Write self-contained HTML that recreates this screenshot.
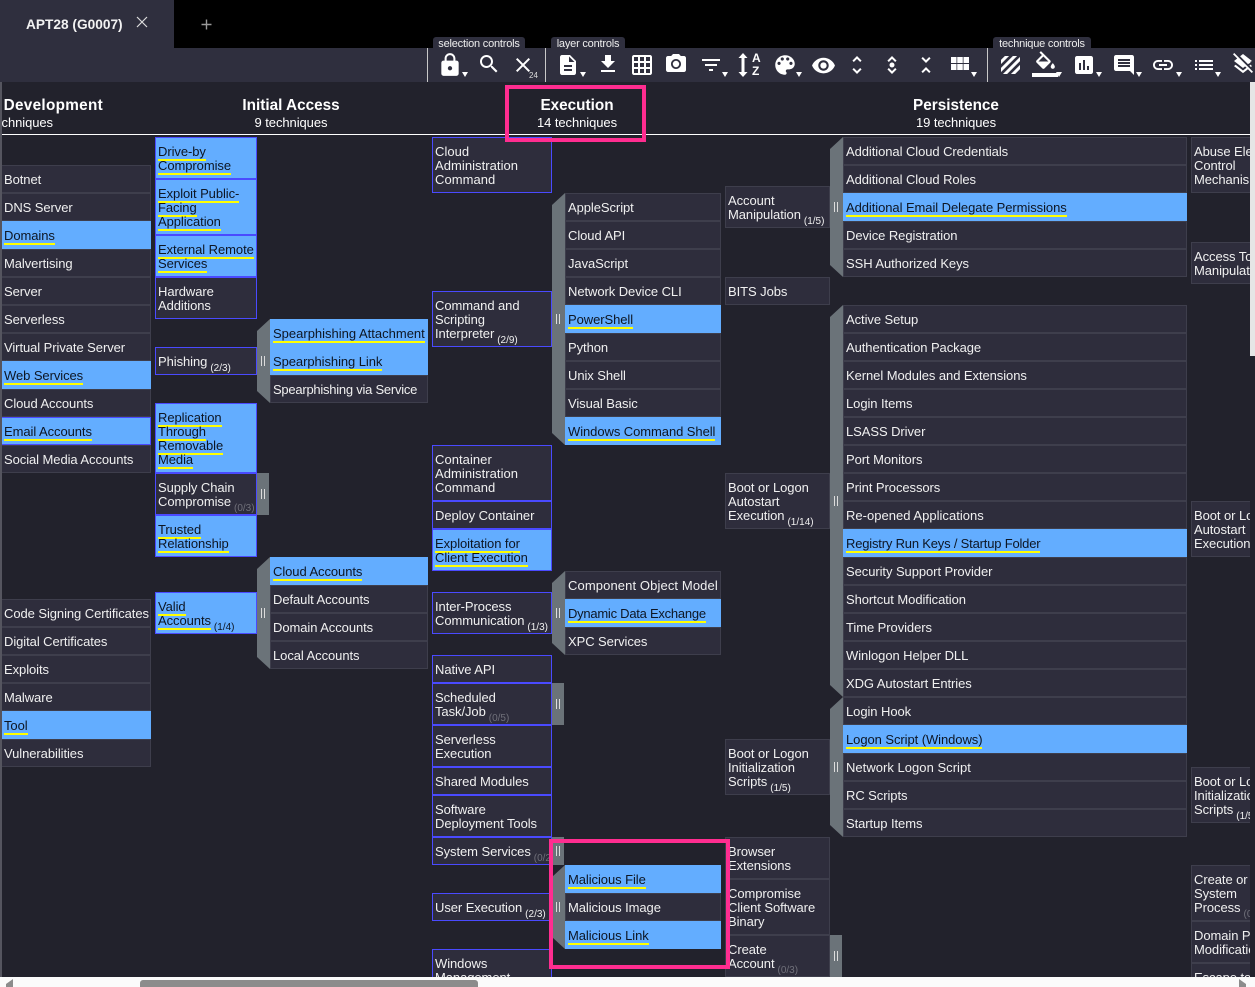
<!DOCTYPE html>
<html><head><meta charset="utf-8"><title>APT28 (G0007)</title>
<style>
html,body{margin:0;padding:0;background:#000;width:1255px;height:987px;overflow:hidden;font-family:"Liberation Sans",sans-serif}
div,svg{position:absolute}
#tool{left:0;top:48px;width:1255px;height:34px;background:#2f2f3e}
#page{left:0;top:82px;width:1255px;height:895px;background:#22222c}
#map{left:2px;top:0;width:1248px;height:977px;overflow:hidden}
#map>div{margin-left:-2px}
.c{box-sizing:border-box;background:#2e2d3c;border:1px solid #3e3e4c;padding:7px 2px 5px;line-height:14px;font-size:13px;letter-spacing:-.07px;color:#f0f0f0;white-space:nowrap;overflow:hidden}
.p{border-color:#4a4aff}
.b{background:#63adff;color:#0d1624;border-color:#63adff}
.bp{background:#63adff;color:#0d1624;border-color:#4a4aff}
u{text-decoration:none;display:inline-block;height:14px;box-shadow:0 2px 0 #ffff00;vertical-align:top}
i{font-style:normal;font-size:10px;position:relative;top:5px;margin-left:3px;letter-spacing:0}
i.g{color:#70707a}
.n{position:absolute;font-size:10px;letter-spacing:0;color:#70707a}
.c0{left:1px;width:150px}.c1{left:155px;width:102px}.s1{left:270px;width:158px}
.c2{left:432px;width:120px}.s2{left:565px;width:156px}
.c3{left:725px;width:105px}.s3{left:843px;width:344px}.c4{left:1191px;width:90px}
.sb{width:13px;background:#6b7379;clip-path:polygon(0 12px,100% 0,100% 100%,0 calc(100% - 12px))}
.sr{width:12px;background:#6b7379}
.sb:after,.sr:after{content:"";position:absolute;left:4px;top:calc(50% - 5px);width:2px;height:10px;border-left:1px solid #dcdcdc;border-right:1px solid #dcdcdc}
.h{color:#fff;text-align:center;white-space:nowrap}
.t{font-weight:700;font-size:15.3px;top:97px;line-height:18px}
.st{font-size:13px;top:115px;line-height:15px;letter-spacing:-.07px}
.lab{top:37px;height:12px;background:#2f2f3e;border-radius:3px 3px 0 0;color:#eee;font-size:11px;letter-spacing:-.2px;line-height:15px;text-align:center;white-space:nowrap;overflow:hidden}
.sep{top:48px;width:1px;height:34px;background:#c8c8c8}
.d{top:72px;width:0;height:0;border-left:3px solid transparent;border-right:3px solid transparent;border-top:5px solid #fff}
svg{fill:#fff}
.pk{box-sizing:border-box;border:4px solid #ff2d90}
</style></head><body>
<div style="left:0;top:0;width:174px;height:48px;background:#2f2f3e"></div>
<div style="left:26px;top:16px;color:#f2f2f2;font-size:13.7px;font-weight:700;line-height:17px;white-space:nowrap">APT28 (G0007)</div>
<svg style="left:134px;top:14px;fill:#ddd" width="16" height="16" viewBox="0 0 16 16"><path d="M3 3l10 10M13 3L3 13" stroke="#ddd" stroke-width="1.2" fill="none"/></svg>
<svg style="left:200px;top:18px" width="13" height="13" viewBox="0 0 13 13"><path d="M6.500 1.500v10M1.500 6.500h10" stroke="#999" stroke-width="1.400" fill="none"/></svg>

<div id="tool"></div>
<div class="lab" style="left:433px;width:92px">selection controls</div>
<div class="lab" style="left:551px;width:74px">layer controls</div>
<div class="lab" style="left:993px;width:98px">technique controls</div>
<div class="sep" style="left:427px"></div><div class="sep" style="left:545px"></div><div class="sep" style="left:987px"></div>

<svg style="left:437px;top:52px" width="26" height="26" viewBox="0 0 24 24"><path d="M18 8h-1V6c0-2.76-2.24-5-5-5S7 3.24 7 6v2H6c-1.1 0-2 .9-2 2v10c0 1.1.9 2 2 2h12c1.1 0 2-.9 2-2V10c0-1.1-.9-2-2-2zm-6 9c-1.1 0-2-.9-2-2s.9-2 2-2 2 .9 2 2-.9 2-2 2zm3.1-9H8.9V6c0-1.71 1.39-3.1 3.1-3.1 1.71 0 3.1 1.39 3.1 3.1v2z"/></svg>
<div class="d" style="left:462px"></div>
<svg style="left:477px;top:52px" width="24" height="24" viewBox="0 0 24 24"><path d="M15.5 14h-.79l-.28-.27C15.41 12.59 16 11.11 16 9.5 16 5.91 13.09 3 9.5 3S3 5.91 3 9.5 5.91 16 9.5 16c1.61 0 3.09-.59 4.23-1.57l.27.28v.79l5 4.99L20.49 19l-4.99-5zm-6 0C7.01 14 5 11.99 5 9.5S7.01 5 9.5 5 14 7.01 14 9.5 11.99 14 9.5 14z"/></svg>
<svg style="left:511px;top:53px" width="24" height="24" viewBox="0 0 24 24"><path d="M19 6.41L17.59 5 12 10.59 6.41 5 5 6.41 10.59 12 5 17.59 6.41 19 12 13.41 17.59 19 19 17.59 13.41 12z"/></svg>
<div style="left:529px;top:71px;color:#ddd;font-size:8px;line-height:9px">24</div>
<svg style="left:556px;top:53px" width="24" height="24" viewBox="0 0 24 24"><path d="M14 2H6c-1.1 0-1.99.9-1.99 2L4 20c0 1.1.89 2 1.99 2H18c1.1 0 2-.9 2-2V8l-6-6zm2 16H8v-2h8v2zm0-4H8v-2h8v2zm-3-5V3.5L18.5 9H13z"/></svg>
<div class="d" style="left:580px"></div>
<svg style="left:596px;top:52px" width="24" height="24" viewBox="0 0 24 24"><path d="M19 9h-4V3H9v6H5l7 7 7-7zM5 18v2h14v-2H5z"/></svg>
<svg style="left:630px;top:53px" width="24" height="24" viewBox="0 0 24 24"><path d="M20 2H4c-1.1 0-2 .9-2 2v16c0 1.1.9 2 2 2h16c1.1 0 2-.9 2-2V4c0-1.1-.9-2-2-2zM8 20H4v-4h4v4zm0-6H4v-4h4v4zm0-6H4V4h4v4zm6 12h-4v-4h4v4zm0-6h-4v-4h4v4zm0-6h-4V4h4v4zm6 12h-4v-4h4v4zm0-6h-4v-4h4v4zm0-6h-4V4h4v4z"/></svg>
<svg style="left:664px;top:52px" width="24" height="24" viewBox="0 0 24 24"><circle cx="12" cy="12" r="3.2"/><path d="M9 2L7.17 4H4c-1.1 0-2 .9-2 2v12c0 1.1.9 2 2 2h16c1.1 0 2-.9 2-2V6c0-1.1-.9-2-2-2h-3.17L15 2H9zm3 15c-2.76 0-5-2.24-5-5s2.24-5 5-5 5 2.24 5 5-2.24 5-5 5z"/></svg>
<svg style="left:699px;top:53px" width="24" height="24" viewBox="0 0 24 24"><path d="M10 18h4v-2h-4v2zM3 6v2h18V6H3zm3 7h12v-2H6v2z"/></svg>
<div class="d" style="left:722px"></div>
<svg style="left:737px;top:52px" width="12" height="26" viewBox="0 0 12 26"><path d="M6 1L1.5 6h3v14h-3L6 25l4.500-5h-3V6h3z"/></svg>
<div style="left:752px;top:51px;color:#fff;font-size:12px;font-weight:700;line-height:14px">A</div>
<div style="left:752px;top:64px;color:#fff;font-size:12px;font-weight:700;line-height:14px">Z</div>
<svg style="left:772px;top:52px" width="26" height="26" viewBox="0 0 24 24"><path d="M12 3c-4.970 0-9 4.030-9 9s4.030 9 9 9c.83 0 1.500-.67 1.500-1.500 0-.39-.15-.74-.39-1.010-.23-.26-.38-.61-.38-.99 0-.83.67-1.500 1.500-1.500H16c2.760 0 5-2.240 5-5 0-4.420-4.030-8-9-8zm-5.500 9c-.83 0-1.500-.67-1.500-1.500S5.670 9 6.500 9 8 9.670 8 10.500 7.330 12 6.500 12zm3-4C8.670 8 8 7.330 8 6.500S8.670 5 9.500 5s1.500.67 1.500 1.500S10.330 8 9.500 8zm5 0c-.83 0-1.500-.67-1.500-1.500S13.670 5 14.500 5s1.500.67 1.500 1.500S15.330 8 14.500 8zm3 4c-.83 0-1.500-.67-1.500-1.500S16.670 9 17.500 9s1.500.67 1.500 1.500-.67 1.500-1.500 1.500z"/></svg>
<div class="d" style="left:796px"></div>
<svg style="left:811px;top:53px" width="25" height="25" viewBox="0 0 24 24"><path d="M12 4.500C7 4.500 2.730 7.610 1 12c1.730 4.390 6 7.500 11 7.500s9.270-3.110 11-7.500c-1.730-4.390-6-7.500-11-7.500zM12 17c-2.760 0-5-2.240-5-5s2.240-5 5-5 5 2.240 5 5-2.240 5-5 5zm0-8c-1.660 0-3 1.340-3 3s1.340 3 3 3 3-1.340 3-3-1.340-3-3-3z"/></svg>
<svg style="left:845px;top:53px" width="24" height="24" viewBox="0 0 24 24"><path d="M12 5.830L15.170 9l1.410-1.410L12 3 7.410 7.590 8.830 9 12 5.830zm0 12.340L8.830 15l-1.410 1.410L12 21l4.590-4.590L15.170 15 12 18.170z"/></svg>
<svg style="left:880px;top:53px" width="24" height="24" viewBox="0 0 24 24"><path d="M12 5.830L15.170 9l1.410-1.410L12 3 7.410 7.590 8.830 9 12 5.830zm0 12.340L8.830 15l-1.410 1.410L12 21l4.590-4.590L15.170 15 12 18.170z"/><circle cx="12" cy="12" r="2.500"/></svg>
<svg style="left:914px;top:53px" width="24" height="24" viewBox="0 0 24 24"><path d="M7.410 18.590L8.830 20 12 16.830 15.170 20l1.410-1.410L12 14l-4.590 4.590zm9.180-13.180L15.170 4 12 7.170 8.830 4 7.410 5.410 12 10l4.590-4.590z"/></svg>
<svg style="left:951px;top:57px" width="18" height="14" viewBox="0 0 18 14"><path d="M0 0h5.500v6H0zM6.250 0h5.500v6h-5.500zM12.500 0H18v6h-5.500zM0 7h5.500v6H0zM6.250 7h5.500v6h-5.500zM12.500 7H18v6h-5.500z"/></svg>
<div class="d" style="left:971px"></div>
<svg style="left:1001px;top:56px" width="19" height="18" viewBox="0 0 19 18"><path d="M-1 7L7-1M-1 15L15-1M3 19L20 2M11 19l9-9" stroke="#fff" stroke-width="3" fill="none"/></svg>
<svg style="left:1033px;top:51px" width="25" height="20" viewBox="0 0 24 19"><path d="M16.560 8.940L7.620 0 6.210 1.410l2.380 2.380-5.150 5.150c-.59.590-.59 1.540 0 2.120l5.500 5.500c.29.290.68.440 1.060.440s.77-.15 1.060-.440l5.500-5.500c.59-.58.59-1.530 0-2.120zM5.210 10L10 5.210 14.790 10H5.210zM19 11.500s-2 2.170-2 3.500c0 1.100.9 2 2 2s2-.9 2-2c0-1.330-2-3.500-2-3.500z"/></svg>
<div style="left:1032px;top:73px;width:26px;height:4px;background:#fff"></div>
<div class="d" style="left:1056px"></div>
<svg style="left:1072px;top:53px" width="24" height="24" viewBox="0 0 24 24"><path d="M19 3H5c-1.100 0-2 .9-2 2v14c0 1.100.9 2 2 2h14c1.100 0 2-.9 2-2V5c0-1.100-.9-2-2-2zM9 17H7v-7h2v7zm4 0h-2V7h2v10zm4 0h-2v-4h2v4z"/></svg>
<div class="d" style="left:1096px"></div>
<svg style="left:1112px;top:53px" width="24" height="24" viewBox="0 0 24 24"><path d="M21.990 4c0-1.100-.89-2-1.990-2H4c-1.100 0-2 .9-2 2v12c0 1.100.9 2 2 2h14l4 4-.01-18zM18 14H6v-2h12v2zm0-3H6V9h12v2zm0-3H6V6h12v2z"/></svg>
<div class="d" style="left:1136px"></div>
<svg style="left:1151px;top:53px" width="24" height="24" viewBox="0 0 24 24"><path d="M3.900 12c0-1.710 1.390-3.100 3.100-3.100h4V7H7c-2.760 0-5 2.240-5 5s2.240 5 5 5h4v-1.900H7c-1.710 0-3.100-1.390-3.100-3.100zM8 13h8v-2H8v2zm9-6h-4v1.900h4c1.710 0 3.100 1.390 3.100 3.100s-1.390 3.100-3.100 3.100h-4V17h4c2.760 0 5-2.240 5-5s-2.240-5-5-5z"/></svg>
<div class="d" style="left:1176px"></div>
<svg style="left:1192px;top:53px" width="24" height="24" viewBox="0 0 24 24"><path d="M3 13h2v-2H3v2zm0 4h2v-2H3v2zm0-8h2V7H3v2zm4 4h14v-2H7v2zm0 4h14v-2H7v2zM7 7v2h14V7H7z"/></svg>
<div class="d" style="left:1215px"></div>
<svg style="left:1231px;top:52px" width="24" height="24" viewBox="0 0 24 24"><path d="M19.810 14.990l1.190-.92-1.430-1.430-1.190.92 1.430 1.430zm-.45-5.270L21 9l-9-7-2.910 2.270 7.870 7.880 2.400-1.430zM3.270 1L2 2.270l4.220 4.220L3 9l1.630 1.270L12 16l2.100-1.630 1.430 1.430L12 18.540l-7.370-5.730L3 14.070l9 7 4.950-3.850L20.730 21 22 19.730 3.270 1z"/></svg>

<div id="page"></div>
<div id="map">
<div style="left:0;top:97px;width:103px;height:18px;overflow:hidden"><div class="h" style="right:0;top:0;font-weight:700;font-size:15.3px;letter-spacing:.3px;line-height:18px">Resource Development</div></div>
<div style="left:0;top:115px;width:53px;height:15px;overflow:hidden"><div class="h" style="right:0;top:0;font-size:13px;line-height:15px;letter-spacing:-.07px">8 techniques</div></div>
<div class="h t" style="left:191px;width:200px">Initial Access</div><div class="h st" style="left:191px;width:200px">9 techniques</div>
<div class="h t" style="left:477px;width:200px">Execution</div><div class="h st" style="left:477px;width:200px">14 techniques</div>
<div class="h t" style="left:856px;width:200px">Persistence</div><div class="h st" style="left:856px;width:200px">19 techniques</div>
<div style="left:0;top:134px;width:1250px;height:1px;background:#fff"></div>

<div class="c c0" style="top:165px;height:28px">Botnet</div>
<div class="c c0" style="top:193px;height:28px">DNS Server</div>
<div class="c c0 b" style="top:221px;height:28px"><u>Domains</u></div>
<div class="c c0" style="top:249px;height:28px">Malvertising</div>
<div class="c c0" style="top:277px;height:28px">Server</div>
<div class="c c0" style="top:305px;height:28px">Serverless</div>
<div class="c c0" style="top:333px;height:28px">Virtual Private Server</div>
<div class="c c0 b" style="top:361px;height:28px"><u>Web Services</u></div>
<div class="c c0" style="top:389px;height:28px">Cloud Accounts</div>
<div class="c c0 bp" style="top:417px;height:28px"><u>Email Accounts</u></div>
<div class="c c0" style="top:445px;height:28px">Social Media Accounts</div>
<div class="c c0" style="top:599px;height:28px">Code Signing Certificates</div>
<div class="c c0" style="top:627px;height:28px">Digital Certificates</div>
<div class="c c0" style="top:655px;height:28px">Exploits</div>
<div class="c c0" style="top:683px;height:28px">Malware</div>
<div class="c c0 b" style="top:711px;height:28px"><u>Tool</u></div>
<div class="c c0" style="top:739px;height:28px">Vulnerabilities</div>

<div class="c c1 bp" style="top:137px;height:42px"><u>Drive-by</u><br><u>Compromise</u></div>
<div class="c c1 bp" style="top:179px;height:56px"><u>Exploit Public-</u><br><u>Facing</u><br><u>Application</u></div>
<div class="c c1 bp" style="top:235px;height:42px"><u>External Remote</u><br><u>Services</u></div>
<div class="c c1 p" style="top:277px;height:42px">Hardware<br>Additions</div>
<div class="c c1 p" style="top:347px;height:28px">Phishing<i>(2/3)</i></div>
<div class="c c1 bp" style="top:403px;height:70px"><u>Replication</u><br><u>Through</u><br><u>Removable</u><br><u>Media</u></div>
<div class="c c1 p" style="top:473px;height:42px">Supply Chain<br>Compromise<span class="n" style="left:78px;top:28px">(0/3)</span></div>
<div class="c c1 bp" style="top:515px;height:42px"><u>Trusted</u><br><u>Relationship</u></div>
<div class="c c1 bp" style="top:592px;height:42px"><u>Valid</u><br><u>Accounts</u><i style="color:#0d1624">(1/4)</i></div>

<div class="sb" style="left:257px;top:319px;height:84px"></div>
<div class="sr" style="left:257px;top:473px;height:42px"></div>
<div class="sb" style="left:257px;top:557px;height:112px"></div>

<div class="c s1 b" style="top:319px;height:28px"><u style="letter-spacing:0">Spearphishing Attachment</u></div>
<div class="c s1 b" style="top:347px;height:28px"><u>Spearphishing Link</u></div>
<div class="c s1" style="top:375px;height:28px;letter-spacing:-.25px">Spearphishing via Service</div>
<div class="c s1 b" style="top:557px;height:28px"><u>Cloud Accounts</u></div>
<div class="c s1" style="top:585px;height:28px">Default Accounts</div>
<div class="c s1" style="top:613px;height:28px">Domain Accounts</div>
<div class="c s1" style="top:641px;height:28px">Local Accounts</div>

<div class="c c2 p" style="top:137px;height:56px;letter-spacing:.05px">Cloud<br>Administration<br>Command</div>
<div class="c c2 p" style="top:291px;height:56px">Command and<br>Scripting<br>Interpreter<i>(2/9)</i></div>
<div class="c c2 p" style="top:445px;height:56px;letter-spacing:.05px">Container<br>Administration<br>Command</div>
<div class="c c2 p" style="top:501px;height:28px">Deploy Container</div>
<div class="c c2 bp" style="top:529px;height:42px"><u>Exploitation for</u><br><u>Client Execution</u></div>
<div class="c c2 p" style="top:592px;height:42px">Inter-Process<br>Communication<i>(1/3)</i></div>
<div class="c c2 p" style="top:655px;height:28px">Native API</div>
<div class="c c2 p" style="top:683px;height:42px">Scheduled<br>Task/Job<i class="g">(0/5)</i></div>
<div class="c c2 p" style="top:725px;height:42px">Serverless<br>Execution</div>
<div class="c c2 p" style="top:767px;height:28px">Shared Modules</div>
<div class="c c2 p" style="top:795px;height:42px">Software<br>Deployment Tools</div>
<div class="c c2 p" style="top:837px;height:28px">System Services<i class="g">(0/2)</i></div>
<div class="c c2 p" style="top:893px;height:28px">User Execution<i>(2/3)</i></div>
<div class="c c2 p" style="top:949px;height:56px">Windows<br>Management<br>Instrumentation</div>

<div class="sb" style="left:552px;top:193px;height:252px"></div>
<div class="sb" style="left:552px;top:571px;height:84px"></div>
<div class="sr" style="left:552px;top:683px;height:42px"></div>
<div class="sr" style="left:552px;top:837px;height:28px"></div>
<div class="sb" style="left:552px;top:865px;height:84px"></div>

<div class="c s2" style="top:193px;height:28px">AppleScript</div>
<div class="c s2" style="top:221px;height:28px">Cloud API</div>
<div class="c s2" style="top:249px;height:28px">JavaScript</div>
<div class="c s2" style="top:277px;height:28px">Network Device CLI</div>
<div class="c s2 b" style="top:305px;height:28px"><u>PowerShell</u></div>
<div class="c s2" style="top:333px;height:28px">Python</div>
<div class="c s2" style="top:361px;height:28px">Unix Shell</div>
<div class="c s2" style="top:389px;height:28px">Visual Basic</div>
<div class="c s2 b" style="top:417px;height:28px"><u>Windows Command Shell</u></div>
<div class="c s2" style="top:571px;height:28px;letter-spacing:.11px">Component Object Model</div>
<div class="c s2 b" style="top:599px;height:28px"><u style="letter-spacing:-.25px">Dynamic Data Exchange</u></div>
<div class="c s2" style="top:627px;height:28px">XPC Services</div>
<div class="c s2 b" style="top:865px;height:28px"><u>Malicious File</u></div>
<div class="c s2" style="top:893px;height:28px">Malicious Image</div>
<div class="c s2 b" style="top:921px;height:28px"><u>Malicious Link</u></div>

<div class="c c3" style="top:186px;height:42px">Account<br>Manipulation<i>(1/5)</i></div>
<div class="c c3" style="top:277px;height:28px">BITS Jobs</div>
<div class="c c3" style="top:473px;height:56px">Boot or Logon<br>Autostart<br>Execution<i>(1/14)</i></div>
<div class="c c3" style="top:739px;height:56px">Boot or Logon<br>Initialization<br>Scripts<i>(1/5)</i></div>
<div class="c c3" style="top:837px;height:42px">Browser<br>Extensions</div>
<div class="c c3" style="top:879px;height:56px">Compromise<br>Client Software<br>Binary</div>
<div class="c c3" style="top:935px;height:42px">Create<br>Account<i class="g">(0/3)</i></div>

<div class="sb" style="left:830px;top:137px;height:140px"></div>
<div class="sb" style="left:830px;top:305px;height:392px"></div>
<div class="sb" style="left:830px;top:697px;height:140px"></div>
<div class="sr" style="left:830px;top:935px;height:42px"></div>

<div class="c s3" style="top:137px;height:28px">Additional Cloud Credentials</div>
<div class="c s3" style="top:165px;height:28px">Additional Cloud Roles</div>
<div class="c s3 b" style="top:193px;height:28px"><u>Additional Email Delegate Permissions</u></div>
<div class="c s3" style="top:221px;height:28px">Device Registration</div>
<div class="c s3" style="top:249px;height:28px">SSH Authorized Keys</div>
<div class="c s3" style="top:305px;height:28px">Active Setup</div>
<div class="c s3" style="top:333px;height:28px">Authentication Package</div>
<div class="c s3" style="top:361px;height:28px">Kernel Modules and Extensions</div>
<div class="c s3" style="top:389px;height:28px">Login Items</div>
<div class="c s3" style="top:417px;height:28px">LSASS Driver</div>
<div class="c s3" style="top:445px;height:28px">Port Monitors</div>
<div class="c s3" style="top:473px;height:28px">Print Processors</div>
<div class="c s3" style="top:501px;height:28px;letter-spacing:.02px">Re-opened Applications</div>
<div class="c s3 b" style="top:529px;height:28px"><u style="letter-spacing:-.19px">Registry Run Keys / Startup Folder</u></div>
<div class="c s3" style="top:557px;height:28px">Security Support Provider</div>
<div class="c s3" style="top:585px;height:28px">Shortcut Modification</div>
<div class="c s3" style="top:613px;height:28px">Time Providers</div>
<div class="c s3" style="top:641px;height:28px">Winlogon Helper DLL</div>
<div class="c s3" style="top:669px;height:28px">XDG Autostart Entries</div>
<div class="c s3" style="top:697px;height:28px">Login Hook</div>
<div class="c s3 b" style="top:725px;height:28px"><u>Logon Script (Windows)</u></div>
<div class="c s3" style="top:753px;height:28px;letter-spacing:.03px">Network Logon Script</div>
<div class="c s3" style="top:781px;height:28px">RC Scripts</div>
<div class="c s3" style="top:809px;height:28px">Startup Items</div>

<div class="c c4" style="top:137px;height:56px">Abuse Elevation<br>Control<br>Mechanism</div>
<div class="c c4" style="top:242px;height:42px">Access Token<br>Manipulation</div>
<div class="c c4" style="top:501px;height:56px">Boot or Logon<br>Autostart<br>Execution</div>
<div class="c c4" style="top:767px;height:56px">Boot or Logon<br>Initialization<br>Scripts<i>(1/5)</i></div>
<div class="c c4" style="top:865px;height:56px">Create or<br>System<br>Process<i class="g">(0/4)</i></div>
<div class="c c4" style="top:921px;height:42px">Domain Policy<br>Modification</div>
<div class="c c4" style="top:963px;height:42px">Escape to<br>Host</div>

<div class="pk" style="left:505px;top:85px;width:141px;height:57px"></div>
<div class="pk" style="left:549px;top:839px;width:181px;height:130px"></div>
</div>

<div style="left:0;top:82px;width:2px;height:895px;background:#55555f"></div>
<div style="left:1250px;top:82px;width:5px;height:274px;background:#e6e6e6"></div>
<div style="left:0;top:977px;width:1255px;height:10px;background:#fbfbfb"></div>
<div style="left:140px;top:980px;width:338px;height:7px;background:#8c8c8c;border-radius:3px 3px 0 0"></div>
<svg style="left:6px;top:979px;fill:#8c8c8c" width="8" height="8" viewBox="0 0 8 8"><path d="M7 0v8H0V5z"/></svg>
<svg style="left:1238px;top:979px;fill:#8c8c8c" width="8" height="8" viewBox="0 0 8 8"><path d="M1 0v8h7V5z"/></svg>
</body></html>
